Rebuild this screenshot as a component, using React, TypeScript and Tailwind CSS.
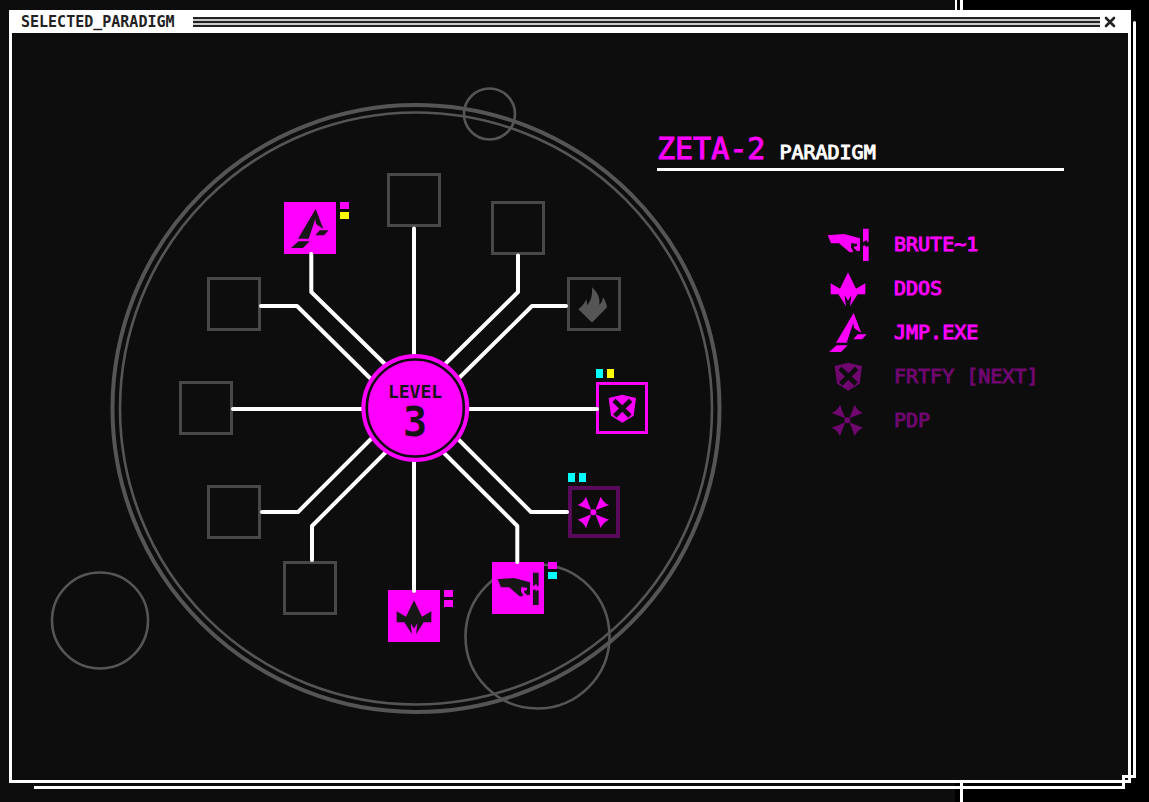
import React from "react";

type IconName = "brute" | "ddos" | "jump" | "fortify" | "pdp" | "flame";

function Icon({ name, className = "" }: { name: IconName; className?: string }) {
  return (
    <svg viewBox="0 0 156 156" aria-hidden="true" fill="currentColor" className={`h-[52px] w-[52px] shrink-0 ${className}`}>
      {name === "brute" && (
        <>
          <path d="M17 52 L24 51 L66 48 L114 61 V98 L106 100 L96 91 V86 L105 84 V78 L88 75 L87 88 L94 100 L90 103 H83 L51 76 H27 Z" />
          <path d="M123 32 H140 V70 L136 74 L133 65 L130 68 L123 73 Z" />
          <path d="M123 84 L129 82 L132 87 L137 84 L140 86 V129 H123 Z" />
        </>
      )}
      {name === "ddos" && (
        <path d="M78 31 L102 80 L130 64 V97 H107 L84 133 L88 100 L78 116 L68 100 L72 133 L49 97 H26 V64 L54 80 Z" />
      )}
      {name === "jump" && (
        <>
          <path d="M95 21 L42 110 H74 L94 51 L96 66 L118 81 Z" />
          <path d="M44 118 H77 L57 138 H21 Z" />
          <path d="M107 85 H134 L120 100 H94 Z" />
        </>
      )}
      {name === "fortify" && (
        <>
          <path d="M79 38 L120 48 L113 101 L79 122 L45 101 L38 48 Z" />
          <path d="M54 55 L102 102 M104 55 L56 102" fill="none" stroke="#0d0d0d" strokeWidth="14" />
        </>
      )}
      {name === "pdp" && (
        <>
          <circle cx="76" cy="79" r="9" />
          {[0, 90, 180, 270].map((angle) => (
            <path key={angle} transform={`rotate(${angle} 76 79)`} d="M54 32 Q47 49 29 57 L50 65 L70 73 L62 54 Z" />
          ))}
        </>
      )}
      {name === "flame" && (
        <path d="M72 28 C86 42 97 56 94 80 C101 75 104 68 104 58 C112 67 116 78 117 88 L74 132 H70 L31 94 C42 86 50 76 55 64 Q58 73 57 82 C68 71 74 54 72 28 Z" />
      )}
    </svg>
  );
}

type Kind = "empty" | "locked" | "active" | "next" | "dim";

interface NodeSpec {
  label: string;
  place: string;
  kind: Kind;
  icon?: IconName;
  pips?: string[];
  pipSide?: "right" | "top";
}

const kindStyles: Record<Kind, string> = {
  empty: "h-[54px] w-[54px] border-3 border-[#484848]",
  locked: "h-[54px] w-[54px] border-3 border-[#484848] text-[#555555]",
  active: "h-[52px] w-[52px] bg-[#ff00ff] text-[#171717]",
  next: "h-[52px] w-[52px] border-3 border-[#ff00ff] bg-[#0d0d0d] text-[#ff00ff]",
  dim: "h-[52px] w-[52px] border-4 border-[#5a0a5a] bg-[#0d0d0d] text-[#ff00ff]",
};

const nodes: NodeSpec[] = [
  { label: "Slot 12", place: "left-[337px] top-[87px]", kind: "empty" },
  { label: "Slot 1", place: "left-[441px] top-[115px]", kind: "empty" },
  { label: "Slot 2", place: "left-[517px] top-[191px]", kind: "locked", icon: "flame" },
  { label: "FRTFY", place: "left-[546px] top-[296px]", kind: "next", icon: "fortify", pipSide: "top", pips: ["bg-[#00ffff]", "bg-[#ffff00]"] },
  { label: "PDP", place: "left-[518px] top-[400px]", kind: "dim", icon: "pdp", pipSide: "top", pips: ["bg-[#00ffff]", "bg-[#00ffff]"] },
  { label: "BRUTE~1", place: "left-[442px] top-[476px]", kind: "active", icon: "brute", pipSide: "right", pips: ["bg-[#ff00ff]", "bg-[#00ffff]"] },
  { label: "DDOS", place: "left-[338px] top-[504px]", kind: "active", icon: "ddos", pipSide: "right", pips: ["bg-[#ff00ff]", "bg-[#ff00ff]"] },
  { label: "Slot 7", place: "left-[233px] top-[475px]", kind: "empty" },
  { label: "Slot 8", place: "left-[157px] top-[399px]", kind: "empty" },
  { label: "Slot 9", place: "left-[129px] top-[295px]", kind: "empty" },
  { label: "Slot 10", place: "left-[157px] top-[191px]", kind: "empty" },
  { label: "JMP.EXE", place: "left-[234px] top-[116px]", kind: "active", icon: "jump", pipSide: "right", pips: ["bg-[#ff00ff]", "bg-[#ffff00]"] },
];

function SlotNode({ node }: { node: NodeSpec }) {
  return (
    <div className={`absolute ${node.place}`}>
      <button type="button" aria-label={node.label} className={`flex items-center justify-center ${kindStyles[node.kind]}`}>
        {node.icon && <Icon name={node.icon} />}
      </button>
      {node.pips && (
        <div className={node.pipSide === "right" ? "absolute left-14 top-0 flex flex-col gap-[3px]" : "absolute -top-[13px] left-0 flex gap-1"}>
          {node.pips.map((pip, i) => (
            <span key={i} className={`${pip} ${node.pipSide === "right" ? "h-[7px] w-[9px]" : "h-[9px] w-[7px]"}`} />
          ))}
        </div>
      )}
    </div>
  );
}

function Diagram() {
  return (
    <section aria-label="Paradigm slots" className="relative h-[630px] w-[607px] shrink-0">
      <svg viewBox="50 86 672 630" aria-hidden="true" className="pointer-events-none absolute left-0 top-0 h-[630px] w-[672px] max-w-none" fill="none" stroke="#555555" strokeWidth="2.6">
        <circle cx="416" cy="408.5" r="303.5" strokeWidth="4" />
        <circle cx="416" cy="408.5" r="296" />
        <circle cx="489.5" cy="114" r="25.5" />
        <circle cx="100" cy="620.5" r="48" />
        <circle cx="537.5" cy="636.5" r="72" />
      </svg>
      {nodes.map((node) => (
        <SlotNode key={node.label} node={node} />
      ))}
      <svg viewBox="50 86 672 630" aria-hidden="true" className="pointer-events-none absolute left-0 top-0 h-[630px] w-[672px] max-w-none" fill="none" stroke="#ffffff" strokeWidth="4" strokeLinecap="round" strokeLinejoin="round">
        <path d="M414 228.500 V408 M414 591 V408 M233 409 H597" />
        <path d="M518 255.500 V292 L440 369 M566 306 H532 L454 383" />
        <path d="M567 512 H531 L453 434 M517.300 562 V526 L438 447" />
        <path d="M312 560 V526 L392 446 M262 512 H298 L378 432" />
        <path d="M261 306 H297 L376 384 M311.300 254 V292 L389 368" />
        <circle cx="415.300" cy="408" r="54" fill="#ff00ff" stroke="none" />
        <circle cx="415.300" cy="408" r="48.500" stroke="#0d0d0d" strokeWidth="2.600" />
      </svg>
      <div className="absolute left-[311px] top-[268px] flex h-[108px] w-[108px] flex-col items-center pt-7 text-[#141414]">
        <span className="text-[18px] font-bold leading-5">LEVEL</span>
        <span className="text-[40px] font-bold leading-10">3</span>
      </div>
    </section>
  );
}

const programs: { name: string; icon: IconName; tone: string }[] = [
  { name: "BRUTE~1", icon: "brute", tone: "text-[#ff00ff]" },
  { name: "DDOS", icon: "ddos", tone: "text-[#ff00ff]" },
  { name: "JMP.EXE", icon: "jump", tone: "text-[#ff00ff]" },
  { name: "FRTFY [NEXT]", icon: "fortify", tone: "text-[#6f076f]" },
  { name: "PDP", icon: "pdp", tone: "text-[#6f076f]" },
];

function Backdrop() {
  return (
    <div aria-hidden="true" className="absolute inset-0 flex">
      <div className="flex-1 bg-[#0d0d0d]" />
      <div className="flex w-[194px] gap-[3px] bg-black">
        <div className="h-3 w-[2px] bg-white" />
        <div className="w-[3px] bg-white" />
      </div>
    </div>
  );
}

export default function App() {
  return (
    <main className="relative flex min-h-screen overflow-hidden pb-[19px] pl-[9px] pr-[18px] pt-[10px] font-['DejaVu_Sans_Mono',monospace]">
      <Backdrop />
      <div className="relative flex flex-1 flex-col border-x-3 border-b-3 border-white bg-[#0d0d0d]">
        <header className="flex h-[23px] items-center bg-white pl-[9px] pr-3 text-[#222222]">
          <h1 className="w-[172px] shrink-0 text-[15px] font-bold leading-5">SELECTED_PARADIGM</h1>
          <div aria-hidden="true" className="flex flex-1 flex-col gap-[2px] bg-[#c8c8c8]">
            <div className="h-[2px] bg-[#222222]" />
            <div className="h-[2px] bg-[#222222]" />
            <div className="h-[2px] bg-[#222222]" />
          </div>
          <button type="button" aria-label="Close" className="ml-1 flex items-center">
            <svg viewBox="0 0 12 12" className="h-3 w-3" stroke="currentColor" strokeWidth="2.6" strokeLinecap="round">
              <path d="M2 2 L10 10 M10 2 L2 10" />
            </svg>
          </button>
        </header>
        <div className="flex flex-1 pl-[38px] pt-[53px]">
          <Diagram />
          <aside className="w-[407px] pt-[47px]">
            <h2 className="flex items-baseline gap-[14px] border-b-3 border-white leading-8 [-webkit-text-stroke:1px_currentColor]">
              <span className="text-[30px] text-[#ff00ff]">ZETA-2</span>
              <span className="text-[20px] text-white">PARADIGM</span>
            </h2>
            <ul className="mt-[51px] pl-[165px]">
              {programs.map((p) => (
                <li key={p.name} className={`flex h-11 items-center gap-5 ${p.tone}`}>
                  <Icon name={p.icon} />
                  <span className="whitespace-nowrap text-[20px] leading-6 [-webkit-text-stroke:1px_currentColor]">{p.name}</span>
                </li>
              ))}
            </ul>
          </aside>
        </div>
        <div aria-hidden="true" className="pointer-events-none absolute -right-[8px] bottom-[2px] top-[11px] w-[3px] rounded-t-sm bg-white" />
        <div aria-hidden="true" className="pointer-events-none absolute -bottom-[9px] -right-[8px] h-[14px] w-[14px] border-l-3 border-t-3 border-white" />
        <div aria-hidden="true" className="pointer-events-none absolute -bottom-[9px] left-[22px] right-[3px] h-[3px] bg-white" />
      </div>
    </main>
  );
}
